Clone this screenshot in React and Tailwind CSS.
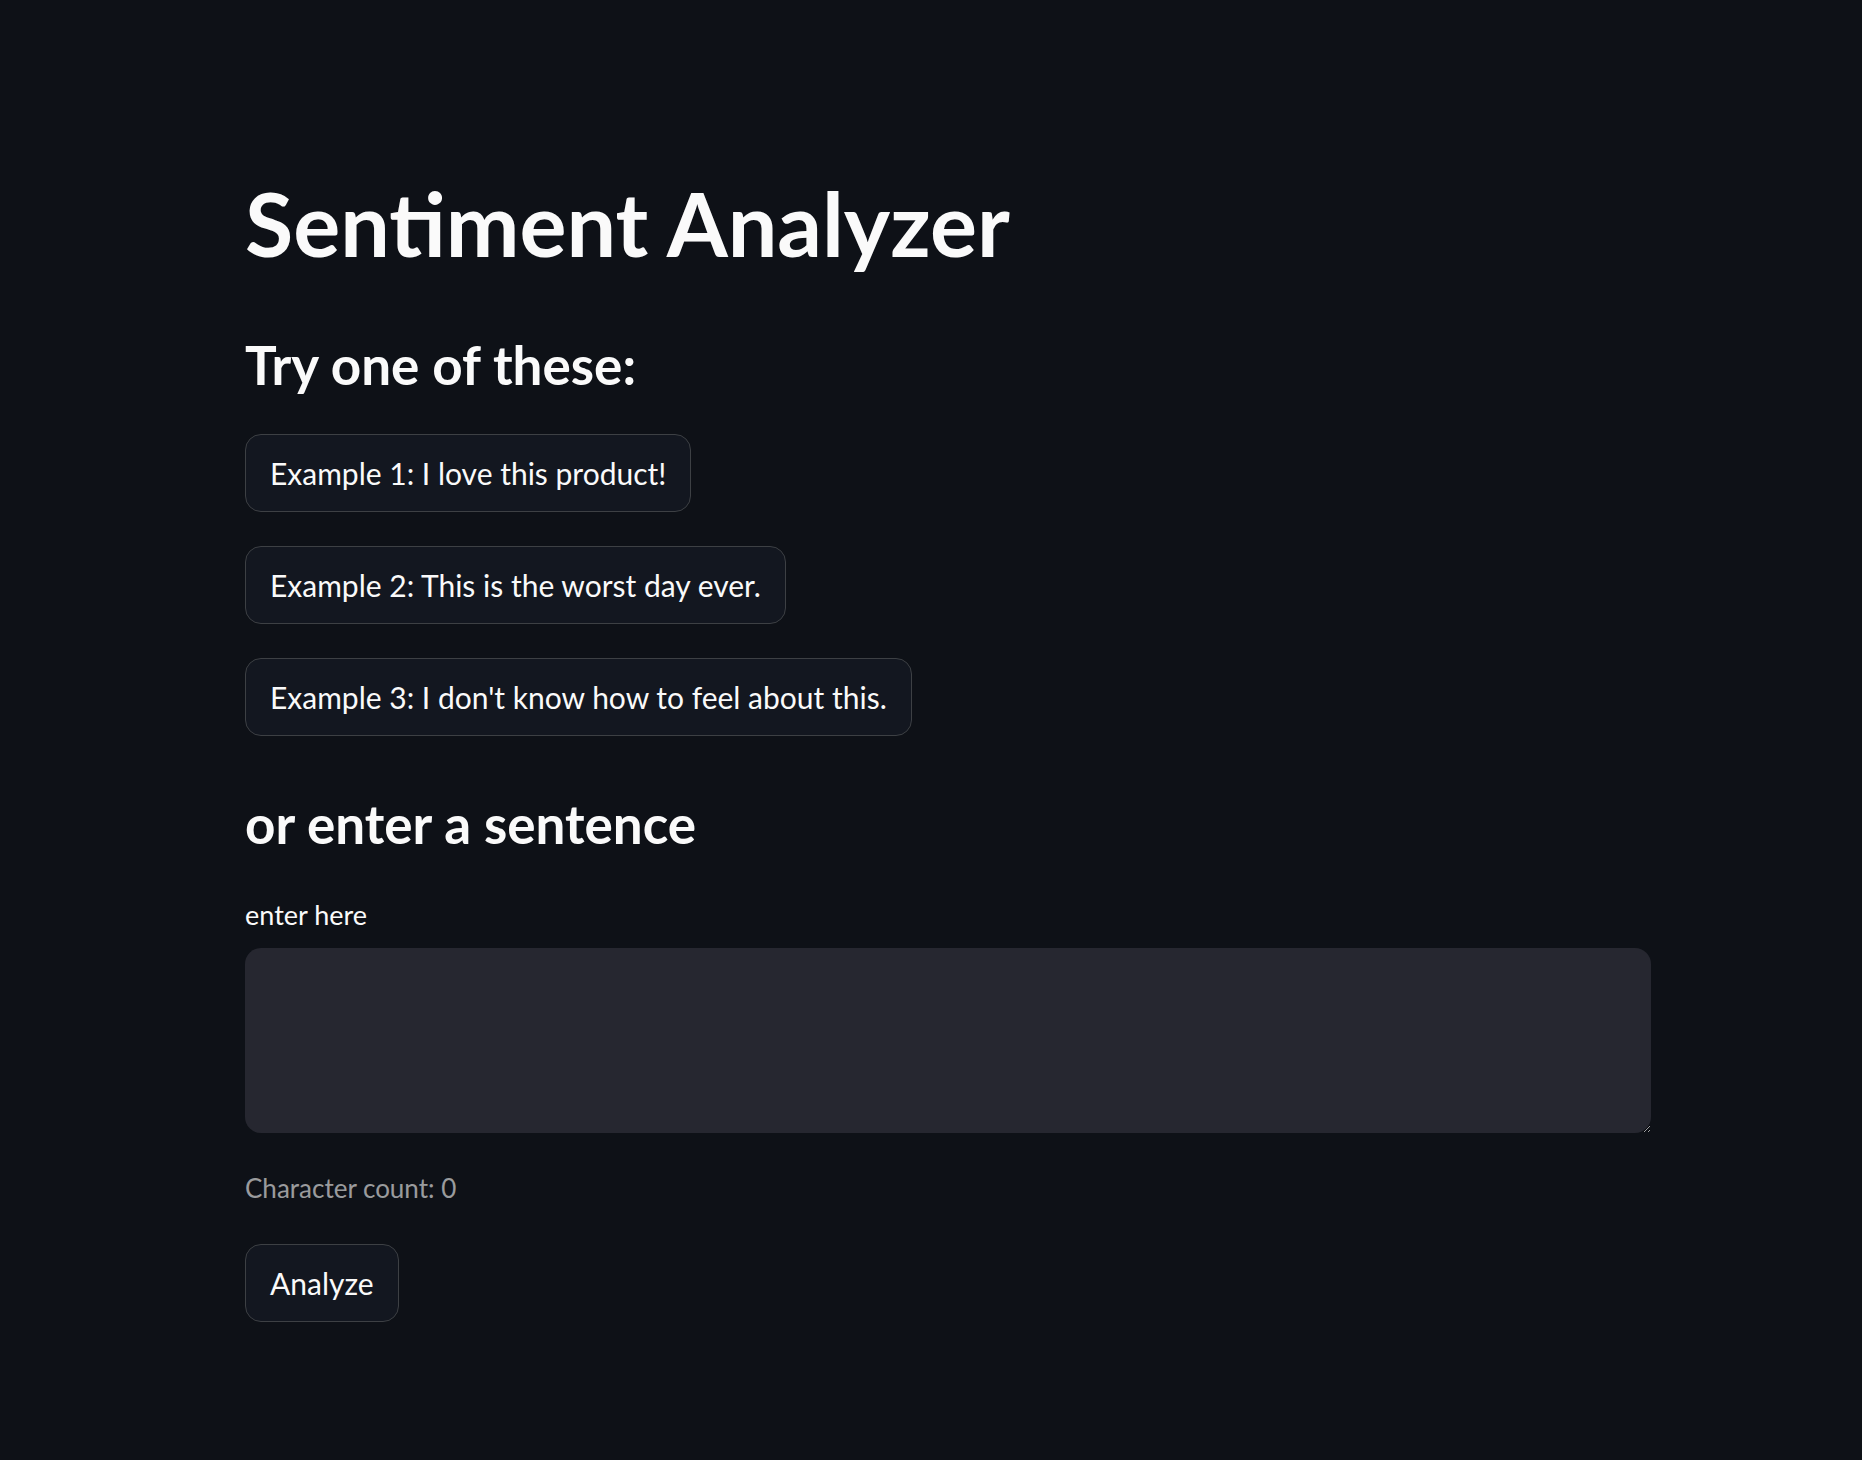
import React from "react";

const examples = [
  "Example 1: I love this product!",
  "Example 2: This is the worst day ever.",
  "Example 3: I don't know how to feel about this.",
];

export default function App() {
  return (
    <div className="min-h-screen w-full bg-[#0e1117] text-[#fafafa] font-['Lato',sans-serif]">
      <div className="ml-[245px] w-[1406px] pt-[170px] pb-[120px]">

        <h1 className="text-[88px] leading-[106px] font-bold">
          Sentiment Analyzer
        </h1>

        <h3 className="mt-[57px] text-[53px] leading-[64px] font-bold">
          Try one of these:
        </h3>

        <div className="mt-[37px] flex flex-col items-start gap-[34px]">
          {examples.map((ex) => (
            <button
              key={ex}
              className="h-[78px] px-6 flex items-center rounded-2xl border border-[#3d4044] bg-[#131720] text-[30px] text-[#fafafa]"
            >
              {ex}
            </button>
          ))}
        </div>

        <h2 className="mt-[56px] text-[53px] leading-[64px] font-bold">
          or enter a sentence
        </h2>

        <label className="block mt-[42px] text-[27px] leading-[34px]">
          enter here
        </label>

        <textarea
          className="block mt-[16px] w-full h-[185px] rounded-2xl bg-[#262730] resize-y outline-none border-0 p-4 text-[30px] text-[#fafafa] [color-scheme:dark]"
        ></textarea>

        <p className="mt-[38px] text-[26px] leading-[34px] text-[#fafafa]/60">
          Character count: 0
        </p>

        <button className="mt-[39px] h-[78px] px-6 flex items-center rounded-2xl border border-[#3d4044] bg-[#131720] text-[30px] text-[#fafafa]">
          Analyze
        </button>

      </div>
    </div>
  );
}
